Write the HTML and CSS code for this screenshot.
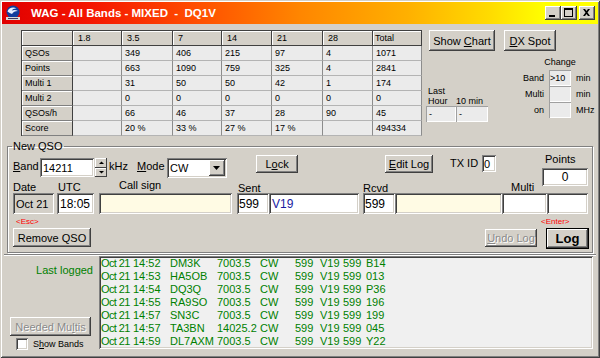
FILE: index.html
```html
<!DOCTYPE html>
<html lang="en">
<head>
  <meta charset="UTF-8">
  <meta name="viewport" content="width=device-width, initial-scale=1.0">
  <title>WAG - All Bands - MIXED - DQ1V</title>
  <link rel="stylesheet" href="styles.css">
</head>
<body>
  <div class="window">
    <div class="titlebar">
      <svg class="app-icon" viewBox="0 0 16 16">
        <circle cx="8" cy="7" r="6.5" fill="#123c9c"/>
        <path d="M2.5 6.5C3.5 3 8 1.5 11.5 3.5 9.5 3.2 7.5 4 6.8 5.6 8.8 4.8 11 4.9 13 6 10 6 8 7 7 9 5.5 8.5 4 7.6 2.5 6.5z" fill="#e8f0ff"/>
        <rect x="1" y="12" width="14" height="3" fill="#d8d8d8"/>
        <rect x="3" y="13" width="10" height="1" fill="#3a3a60"/>
      </svg>
      <span class="title">WAG - All Bands - MIXED  -  DQ1V</span>
      <div class="caption-btns">
        <span class="cbtn"><svg viewBox="0 0 16 14"><rect x="4" y="9" width="6" height="2"/></svg></span>
        <span class="cbtn"><svg viewBox="0 0 16 14"><path d="M3 2h9v9H3z M4 4v6h7V4z" fill-rule="evenodd"/></svg></span>
        <span class="cbtn close"><svg viewBox="0 0 16 14"><path d="M4 3h2l1.5 2 1.5-2h2L8.5 6.5 11 10H9L7.5 8 6 10H4l2.5-3.5z"/></svg></span>
      </div>
    </div>

    <div class="client">
      <div class="top">
        <table class="stats">
          <colgroup>
            <col style="width: 51px"><col style="width: 49px"><col style="width: 51px"><col style="width: 49px">
            <col style="width: 50px"><col style="width: 51px"><col style="width: 50px"><col style="width: 49px">
          </colgroup>
          <tr class="head">
            <th></th><th>1.8</th><th>3.5</th><th>7</th><th>14</th><th>21</th><th>28</th><th class="total">Total</th>
          </tr>
          <tr><th class="rowh">QSOs</th><td></td><td>349</td><td>406</td><td>215</td><td>97</td><td>4</td><td>1071</td></tr>
          <tr><th class="rowh">Points</th><td></td><td>663</td><td>1090</td><td>759</td><td>325</td><td>4</td><td>2841</td></tr>
          <tr><th class="rowh">Multi 1</th><td></td><td>31</td><td>50</td><td>50</td><td>42</td><td>1</td><td>174</td></tr>
          <tr><th class="rowh">Multi 2</th><td></td><td>0</td><td>0</td><td>0</td><td>0</td><td>0</td><td>0</td></tr>
          <tr><th class="rowh">QSOs/h</th><td></td><td>66</td><td>46</td><td>37</td><td>28</td><td>90</td><td>45</td></tr>
          <tr><th class="rowh">Score</th><td></td><td>20 %</td><td>33 %</td><td>27 %</td><td>17 %</td><td></td><td>494334</td></tr>
        </table>

        <div class="side">
          <div class="side-btns">
            <span class="btn chart"><span>Show <u>C</u>hart</span></span>
            <span class="btn spot"><span><u>D</u>X Spot</span></span>
          </div>
          <div class="side-lower">
            <div class="last">
              <span class="last-l1">Last</span>
              <span>Hour</span><span class="ten">10 min</span>
              <span class="sbox">-</span><span class="sbox">-</span>
            </div>
            <div class="change">
              <span class="change-head">Change</span>
              <span class="clbl">Band</span><span class="sbox">&gt;10</span><span class="unit">min</span>
              <span class="clbl">Multi</span><span class="sbox"></span><span class="unit">min</span>
              <span class="clbl">on</span><span class="sbox"></span><span class="unit">MHz</span>
            </div>
          </div>
        </div>
      </div>

      <fieldset class="qso">
        <legend>New QSO</legend>
        <div class="qrow qrow-1">
          <span class="lbl-band"><u>B</u>and</span>
          <span class="edit band-edit">14211</span>
          <span class="spin">
            <span class="spin-btn"><svg viewBox="0 0 12 9"><path d="M4 6h5L6.5 3.5z"/></svg></span>
            <span class="spin-btn"><svg viewBox="0 0 12 9"><path d="M4 3h5L6.5 5.5z"/></svg></span>
          </span>
          <span class="khz">kHz</span>
          <span class="lbl-mode"><u>M</u>ode</span>
          <span class="edit combo">CW<span class="combo-btn"><svg viewBox="0 0 16 14"><path d="M4 5h7l-3.5 4z"/></svg></span></span>
          <span class="btn lock"><span>L<u>o</u>ck</span></span>
          <span class="btn editlog"><span><u>E</u>dit Log</span></span>
          <span class="txid-lbl">TX ID</span>
          <span class="edit txid">0</span>
          <div class="points">
            <span class="points-lbl">Points</span>
            <span class="edit points-box">0</span>
          </div>
        </div>

        <div class="qrow qrow-2">
          <span class="h-date">Date</span>
          <span class="h-utc">UTC</span>
          <span class="h-call">Call sign</span>
          <span class="h-sent">Sent</span>
          <span class="h-rcvd">Rcvd</span>
          <span class="h-multi">Multi</span>
        </div>

        <div class="qrow qrow-3">
          <span class="edit f-date">Oct 21</span>
          <span class="edit f-utc">18:05</span>
          <span class="edit f-call"></span>
          <span class="edit f-rst">599</span>
          <span class="edit f-exch">V19</span>
          <span class="edit f-rst f-rcvd">599</span>
          <span class="edit f-rexch"></span>
          <span class="edit f-m1"></span>
          <span class="edit f-m2"></span>
        </div>

        <div class="qrow qrow-4">
          <div class="keycol">
            <span class="key">&lt;Esc&gt;</span>
            <span class="btn remove"><span>Remove QSO</span></span>
          </div>
          <span class="btn disabled undo"><span><u>U</u>ndo Log</span></span>
          <div class="keycol enter">
            <span class="key">&lt;Enter&gt;</span>
            <span class="btn default log"><span>Log</span></span>
          </div>
        </div>
      </fieldset>

      <div class="lower">
        <div class="lower-left">
          <span class="last-logged">Last logged</span>
          <span class="btn disabled needed"><span>Needed Mu<u>l</u>tis</span></span>
          <span class="check"><span class="check-box"></span><span>S<u>h</u>ow Bands</span></span>
        </div>
        <div class="loglist">
          <div class="entry"><span>Oct 21</span><span>14:52</span><span>DM3K</span><span>7003.5</span><span>CW</span><span>599</span><span>V19</span><span>599</span><span>B14</span></div>
          <div class="entry"><span>Oct 21</span><span>14:53</span><span>HA5OB</span><span>7003.5</span><span>CW</span><span>599</span><span>V19</span><span>599</span><span>013</span></div>
          <div class="entry"><span>Oct 21</span><span>14:54</span><span>DQ3Q</span><span>7003.5</span><span>CW</span><span>599</span><span>V19</span><span>599</span><span>P36</span></div>
          <div class="entry"><span>Oct 21</span><span>14:55</span><span>RA9SO</span><span>7003.5</span><span>CW</span><span>599</span><span>V19</span><span>599</span><span>196</span></div>
          <div class="entry"><span>Oct 21</span><span>14:57</span><span>SN3C</span><span>7003.5</span><span>CW</span><span>599</span><span>V19</span><span>599</span><span>199</span></div>
          <div class="entry"><span>Oct 21</span><span>14:57</span><span>TA3BN</span><span>14025.2</span><span>CW</span><span>599</span><span>V19</span><span>599</span><span>045</span></div>
          <div class="entry"><span>Oct 21</span><span>14:59</span><span>DL7AXM</span><span>7003.5</span><span>CW</span><span>599</span><span>V19</span><span>599</span><span>Y22</span></div>
        </div>
      </div>
    </div>
  </div>
</body>
</html>
```

FILE: styles.css
```css
* {
  box-sizing: border-box;
}

body {
  margin: 0;
  background: #d4d0c8;
  font-family: "Liberation Sans", Arial, sans-serif;
  font-size: 11px;
  color: #000;
}

/* window frame */
.window {
  width: 600px;
  height: 358px;
  padding: 2px;
  display: flex;
  flex-direction: column;
  background: #d4d0c8;
  box-shadow: inset 1px 1px #d4d0c8, inset -1px -1px #404040, inset 2px 2px #fff, inset -2px -2px #808080;
}

.titlebar {
  flex: none;
  height: 22px;
  display: flex;
  align-items: center;
  padding: 0 3px;
  color: #fff;
  background: linear-gradient(to right, #e00000 0%, #f41400 14%, #ff4c00 32%, #ff8600 50%, #ffb000 68%, #ffdc00 82%, #ffff00 91%);
}

.app-icon {
  flex: none;
  width: 16px;
  height: 16px;
}

.title {
  margin-left: 10px;
  font-size: 11.5px;
  font-weight: bold;
  white-space: pre;
}

.caption-btns {
  margin-left: auto;
  display: flex;
}

.cbtn {
  width: 16px;
  height: 14px;
  background: #d4d0c8;
  box-shadow: inset -1px -1px #404040, inset 1px 1px #fff, inset -2px -2px #808080;
}

.cbtn svg {
  display: block;
  width: 16px;
  height: 14px;
  fill: #000;
}

.cbtn.close {
  margin-left: 2px;
}

.client {
  flex: 1;
  margin: 0 2px;
  display: flex;
  flex-direction: column;
}

/* common controls */
.btn {
  display: flex;
  align-items: center;
  justify-content: center;
  background: #d4d0c8;
  white-space: nowrap;
  box-shadow: inset -1px -1px #404040, inset 1px 1px #fff, inset -2px -2px #808080;
}

.btn.disabled {
  color: #8a8a8a;
  text-shadow: 1px 1px #fff;
}

.btn.default {
  box-shadow: inset 0 0 0 1px #000, inset -2px -2px #404040, inset 2px 2px #fff, inset -3px -3px #808080;
}

.edit {
  display: flex;
  align-items: center;
  padding-left: 3px;
  background: #fff;
  white-space: nowrap;
  overflow: hidden;
  box-shadow: inset 1px 1px #808080, inset -1px -1px #fff, inset 2px 2px #404040, inset -2px -2px #d4d0c8;
}

.sbox {
  display: flex;
  align-items: center;
  padding-left: 3px;
  background: #ebebeb;
  box-shadow: inset 1px 1px #a0a0a0, inset -1px -1px #fff;
}

/* statistics table */
.top {
  flex: none;
  display: flex;
  align-items: flex-start;
  padding: 6px 0 0 17px;
}

.stats {
  width: 400px;
  table-layout: fixed;
  border-collapse: separate;
  border-spacing: 0;
  font-size: 9px;
  border-top: 1px solid #404040;
  border-left: 1px solid #404040;
}

.stats th,
.stats td {
  height: 15px;
  padding: 0 0 0 3px;
  text-align: left;
  font-weight: normal;
  white-space: nowrap;
  line-height: 12px;
}

.stats td {
  background: #ebebeb;
  border-right: 1px solid #8c8c8c;
  border-bottom: 1px solid #b4b4b4;
}

.stats th {
  background: #d4d0c8;
  border-right: 1px solid #404040;
  border-bottom: 1px solid #808080;
  box-shadow: inset 1px 1px #fff;
}

.stats .head th {
  padding-left: 5px;
  border-bottom-color: #404040;
}

.stats .head th.total {
  padding-left: 2px;
}

.stats .rowh {
  padding-left: 3px;
}

.side {
  margin-left: 4px;
}

.side-btns {
  display: flex;
  margin-left: 3px;
}

.side-btns .btn {
  height: 21px;
}

.chart {
  width: 66px;
}

.spot {
  width: 52px;
  margin-left: 9px;
}

.side-lower {
  display: flex;
  align-items: flex-start;
  margin-top: 6px;
  font-size: 9px;
}

.last {
  margin-top: 29px;
  display: grid;
  grid-template-columns: 30px 32px;
  grid-template-rows: 10px 10px 16px;
  line-height: 10px;
}

.last-l1 {
  grid-column: 1 / 3;
  padding-left: 2px;
}

.last span:nth-child(2) {
  padding-left: 2px;
}

.change {
  display: grid;
  grid-template-columns: 61px 22px auto;
  grid-template-rows: 13px 16px 16px 16px;
  align-items: center;
}

.change-head {
  grid-column: 2;
  margin: 0 -8px;
  text-align: center;
  align-self: start;
}

.clbl {
  grid-column: 1;
  text-align: right;
  padding-right: 5px;
}

.change .sbox {
  height: 16px;
  padding-left: 1px;
}

.unit {
  padding-left: 5px;
}

/* new qso group */
.qso {
  margin: 4px 3px 0;
  padding: 0 3px 3px 5px;
  min-width: 0;
  border: 1px solid #808080;
  box-shadow: inset 1px 1px #fff, 1px 1px #fff;
}

.qso legend {
  margin-left: -1px;
  padding: 0 1px;
  line-height: 13px;
}

.qrow {
  display: flex;
  align-items: flex-start;
}

.qrow-1 {
  height: 25px;
}

.lbl-band {
  width: 27px;
  margin-top: 7px;
}

.band-edit {
  width: 54px;
  height: 19px;
  margin-top: 5px;
}

.spin {
  margin: 5px 0 0 1px;
  display: flex;
  flex-direction: column;
}

.spin-btn {
  width: 12px;
  height: 9.5px;
  background: #d4d0c8;
  box-shadow: inset -1px -1px #404040, inset 1px 1px #fff;
}

.spin-btn svg {
  display: block;
  width: 12px;
  height: 9px;
  fill: #000;
}

.khz {
  width: 28px;
  margin: 7px 0 0 2px;
}

.lbl-mode {
  width: 30px;
  margin-top: 7px;
}

.combo {
  position: relative;
  width: 60px;
  height: 20px;
  margin-top: 5px;
}

.combo-btn {
  position: absolute;
  right: 2px;
  top: 2px;
  width: 16px;
  height: 16px;
  background: #d4d0c8;
  box-shadow: inset -1px -1px #404040, inset 1px 1px #fff, inset -2px -2px #808080;
}

.combo-btn svg {
  display: block;
  width: 16px;
  height: 14px;
  margin-top: 1px;
  fill: #000;
}

.lock {
  width: 42px;
  height: 18px;
  margin: 2px 0 0 29px;
}

.editlog {
  width: 48px;
  height: 18px;
  margin: 2px 0 0 87px;
}

.txid-lbl {
  width: 32px;
  margin: 4px 0 0 17px;
}

.txid {
  width: 14px;
  height: 17px;
  margin-top: 2px;
  padding-left: 2px;
}

.points {
  margin-left: 46px;
  display: flex;
  flex-direction: column;
}

.points-lbl {
  padding-left: 3px;
  line-height: 13px;
}

.points-box {
  width: 46px;
  height: 18px;
  margin-top: 2px;
  justify-content: center;
  padding: 0;
  font-size: 12px;
}

.qrow-2 {
  height: 15px;
  line-height: 13px;
}

.h-date { width: 45px; margin-top: 3px; }
.h-utc { width: 61px; margin-top: 3px; }
.h-call { width: 119px; margin-top: 1px; }
.h-sent { width: 125px; margin-top: 4px; }
.h-rcvd { width: 148px; margin-top: 4px; }
.h-multi { margin-top: 3px; }

.qrow-3 {
  font-size: 12px;
}

.qrow-3 .edit {
  height: 21px;
}

.f-date {
  width: 41px;
  background: #d4d0c8;
  font-size: 11px;
}

.f-utc { width: 37px; margin-left: 3px; }
.f-call { width: 133px; margin-left: 5px; background: #fffbe4; }
.f-rst { width: 32px; margin-left: 5px; padding-left: 2px; }
.f-exch { width: 90px; color: #1a1aa0; }
.f-rcvd { margin-left: 4px; }
.f-rexch { width: 107px; background: #fffbe4; }
.f-m1 { width: 45px; }
.f-m2 { width: 41px; }

.qrow-4 {
  padding-top: 3px;
}

.keycol {
  display: flex;
  flex-direction: column;
}

.key {
  height: 11px;
  line-height: 10px;
  margin-left: 3px;
  font-size: 8px;
  color: #f00;
}

.remove {
  width: 78px;
  height: 19px;
}

.undo {
  width: 52px;
  height: 18px;
  margin: 12px 0 0 auto;
}

.enter {
  margin-left: 9px;
}

.enter .key {
  margin-left: -5px;
}

.log {
  width: 43px;
  height: 21px;
  font-size: 13px;
  font-weight: bold;
}

/* last logged */
.lower {
  flex: 1;
  display: flex;
  margin-top: 1px;
  padding: 1px 3px 0 0;
  border-top: 1px solid #808080;
  box-shadow: inset 0 1px #fff;
  min-height: 0;
}

.lower-left {
  width: 95px;
  flex: none;
  display: flex;
  flex-direction: column;
}

.last-logged {
  margin-top: 8px;
  padding-right: 6px;
  line-height: 13px;
  text-align: right;
  color: #008000;
}

.needed {
  width: 81px;
  height: 19px;
  margin: 40px 0 0 6px;
}

.check {
  display: flex;
  align-items: center;
  margin: 2px 0 0 12px;
  font-size: 9px;
}

.check-box {
  width: 12px;
  height: 12px;
  margin-right: 5px;
  background: #fff;
  box-shadow: inset 1px 1px #808080, inset -1px -1px #fff, inset 2px 2px #404040, inset -2px -2px #d4d0c8;
}

.loglist {
  flex: 1;
  height: 93px;
  padding: 1px 2px 0;
  overflow: hidden;
  background: #f0f0f0;
  color: #008000;
  box-shadow: inset 1px 1px #808080, inset -1px -1px #fff, inset 2px 2px #404040, inset -2px -2px #d4d0c8;
}

.entry {
  display: grid;
  grid-template-columns: 32px 37px 47px 43px 35px 25px 23px 23px auto;
  line-height: 13px;
  white-space: nowrap;
}

.entry span:first-child {
  letter-spacing: -0.6px;
}
```
